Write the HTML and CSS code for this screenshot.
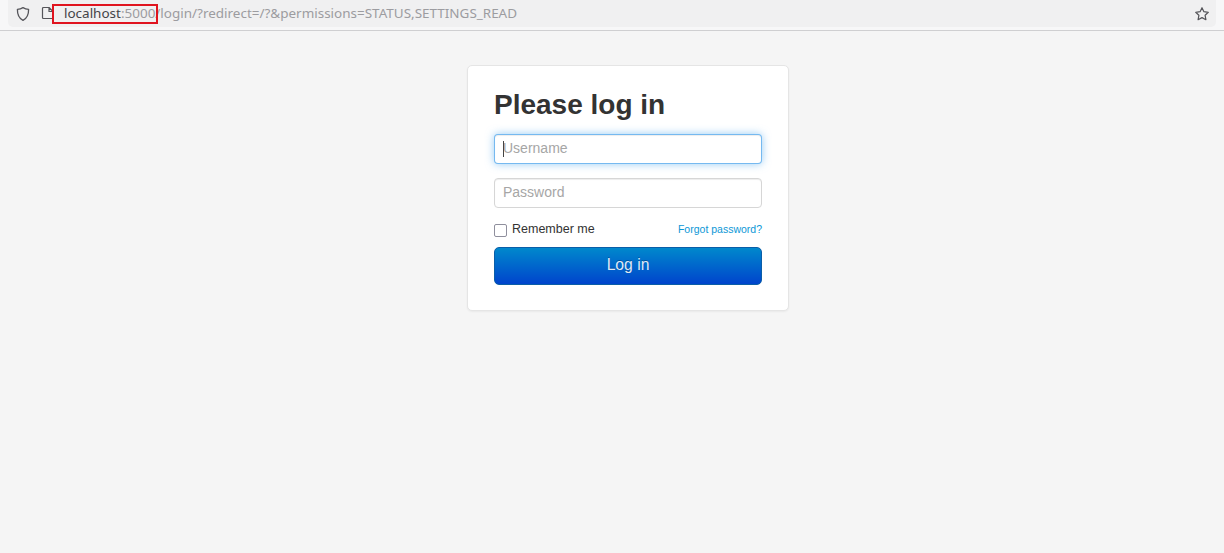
FILE: index.html
```html
<!DOCTYPE html>
<html lang="en">
<head>
<meta charset="utf-8">
<title>Please log in</title>
<link rel="stylesheet" href="styles.css">
</head>
<body>
<header class="toolbar">
  <div class="urlbar">
    <svg class="icon shield" viewBox="0 0 16 16" width="16" height="16"><path d="M8 1.600c1.800 1.100 3.700 1.600 5.600 1.700.1 4.900-1.400 9-5.600 11.100C3.800 12.300 2.300 8.200 2.400 3.300 4.300 3.200 6.200 2.700 8 1.600z" fill="none" stroke="#55555a" stroke-width="1.300" stroke-linejoin="round"/></svg>
    <svg class="icon page" viewBox="0 0 14 14" width="14" height="14"><path d="M2.500 1.500h5.500L12 5.500v7H2.500a1 1 0 0 1-1-1v-9a1 1 0 0 1 1-1zM8 1.500v4h4" fill="none" stroke="#55555a" stroke-width="1.200" stroke-linejoin="round"/></svg>
    <div class="url"><span class="host">localhost</span>:5000/login/?redirect=/?&amp;permissions=STATUS,SETTINGS_READ</div>
    <svg class="icon star" viewBox="0 0 16 16" width="16" height="16"><path d="M8 1.700l1.900 4 4.400.6-3.200 3 .8 4.400L8 11.600l-3.900 2.100.8-4.400-3.200-3 4.400-.6z" fill="none" stroke="#55555a" stroke-width="1.200" stroke-linejoin="round"/></svg>
    <div class="highlight"></div>
  </div>
</header>
<main class="page-body">
  <form class="card">
    <h2 class="heading">Please log in</h2>
    <div class="focus-wrap">
      <input class="field field-focus" type="text" placeholder="Username">
      <span class="caret"></span>
    </div>
    <input class="field" type="password" placeholder="Password">
    <div class="options">
      <label class="remember"><input class="check" type="checkbox"><span>Remember me</span></label>
      <a class="forgot" href="#">Forgot password?</a>
    </div>
    <button class="submit" type="button">Log in</button>
  </form>
</main>
</body>
</html>
```
FILE: styles.css
```css
* { box-sizing: border-box; }
html, body { margin: 0; height: 100%; }
body {
  background: #f5f5f5;
  font-family: "Liberation Sans", Arial, sans-serif;
  overflow: hidden;
}
.toolbar {
  height: 31px;
  background: #f7f7f8;
  border-bottom: 1px solid #cfcfd1;
  padding: 0 8px 3px;
}
.urlbar {
  position: relative;
  height: 27px;
  background: #f0f0f1;
  border-radius: 0 0 5px 5px;
  display: flex;
  align-items: center;
  padding: 0 6px 0 7px;
}
.icon { flex: none; }
.page { margin-left: 10px; margin-top: -1px; }
.url {
  flex: 1;
  margin: -2px 0 0 9px;
  font: 13.470px "Noto Sans", "Open Sans", sans-serif;
  color: #9c9ca0;
  white-space: nowrap;
}
.host { color: #444448; }
.highlight {
  position: absolute;
  left: 44px;
  top: 4px;
  width: 106px;
  height: 20px;
  border: 2px solid #e0141f;
}
.page-body {
  padding: 35px 0 0 467px;
}
.card {
  width: 322px;
  height: 245px;
  margin-top: -1px;
  background: #fff;
  border: 1px solid #e5e5e5;
  border-radius: 5px;
  padding: 19px 26px 0;
  box-shadow: 0 1px 2px rgba(0, 0, 0, .05);
}
.heading {
  margin: 0 0 9px;
  font-size: 28px;
  line-height: 40px;
  font-weight: 700;
  color: #333;
}
.focus-wrap { position: relative; }
.field {
  display: block;
  width: 100%;
  height: 30px;
  margin: 0 0 14px;
  padding: 3px 8px 5px;
  font: 14px/20px "Liberation Sans", Arial, sans-serif;
  color: #555;
  background: #fff;
  border: 1px solid #d6d6d6;
  border-radius: 4px;
  box-shadow: inset 0 1px 1px rgba(0, 0, 0, .075);
  outline: none;
}
.field::placeholder { color: #a6a6a6; opacity: 1; }
.field-focus {
  border-color: rgba(82, 168, 236, .8);
  box-shadow: inset 0 1px 1px rgba(0, 0, 0, .075), 0 0 8px rgba(82, 168, 236, .6);
}
.caret {
  position: absolute;
  left: 9px;
  top: 7px;
  width: 1px;
  height: 16px;
  background: #444;
}
.options {
  display: flex;
  justify-content: space-between;
  align-items: center;
  height: 20px;
  margin: -3px 0 8px;
}
.remember {
  display: flex;
  align-items: center;
  font-size: 12.500px;
  color: #333;
}
.check {
  appearance: none;
  width: 13px;
  height: 13px;
  margin: 3px 5px 0 0;
  background: #fff;
  border: 1px solid #8f8f9d;
  border-radius: 2px;
}
.forgot {
  font-size: 10.500px;
  color: #0d97d6;
  text-decoration: none;
}
.submit {
  display: block;
  width: 100%;
  height: 38px;
  padding: 0 0 3px;
  font: 15.700px "Liberation Sans", Arial, sans-serif;
  color: #dfe8f5;
  background: linear-gradient(#0088cc, #0044cc);
  border: 1px solid #0a5ea8;
  border-radius: 5px;
  text-shadow: 0 -1px 0 rgba(0, 0, 0, .25);
}
.card { height: 246px; }
```
